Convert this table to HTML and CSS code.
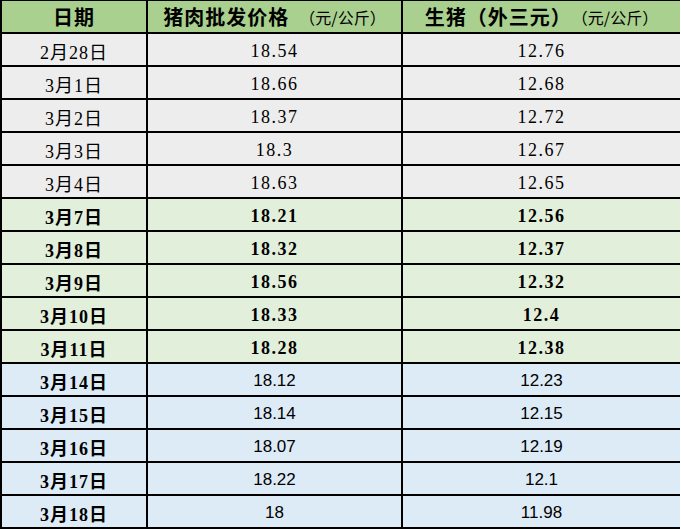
FILE: index.html
```html
<!DOCTYPE html>
<html lang="zh-CN">
<head>
<meta charset="utf-8">
<title>猪肉价格</title>
<link rel="stylesheet" href="styles.css">
</head>
<body>
<div class="sheet">
  <div class="row head">
    <div class="c">日期</div>
    <div class="c">猪肉批发价格<span class="unit gap">（元/公斤）</span></div>
    <div class="c">生猪（外三元）<span class="unit">（元/公斤）</span></div>
  </div>
  <div class="row grey"><div class="c">2月28日</div><div class="c">18.54</div><div class="c">12.76</div></div>
  <div class="row grey"><div class="c">3月1日</div><div class="c">18.66</div><div class="c">12.68</div></div>
  <div class="row grey"><div class="c">3月2日</div><div class="c">18.37</div><div class="c">12.72</div></div>
  <div class="row grey"><div class="c">3月3日</div><div class="c">18.3</div><div class="c">12.67</div></div>
  <div class="row grey"><div class="c">3月4日</div><div class="c">18.63</div><div class="c">12.65</div></div>
  <div class="row green"><div class="c">3月7日</div><div class="c">18.21</div><div class="c">12.56</div></div>
  <div class="row green"><div class="c">3月8日</div><div class="c">18.32</div><div class="c">12.37</div></div>
  <div class="row green"><div class="c">3月9日</div><div class="c">18.56</div><div class="c">12.32</div></div>
  <div class="row green"><div class="c">3月10日</div><div class="c">18.33</div><div class="c">12.4</div></div>
  <div class="row green"><div class="c">3月11日</div><div class="c">18.28</div><div class="c">12.38</div></div>
  <div class="row blue"><div class="c">3月14日</div><div class="c">18.12</div><div class="c">12.23</div></div>
  <div class="row blue"><div class="c">3月15日</div><div class="c">18.14</div><div class="c">12.15</div></div>
  <div class="row blue"><div class="c">3月16日</div><div class="c">18.07</div><div class="c">12.19</div></div>
  <div class="row blue"><div class="c">3月17日</div><div class="c">18.22</div><div class="c">12.1</div></div>
  <div class="row blue"><div class="c">3月18日</div><div class="c">18</div><div class="c">11.98</div></div>
</div>
</body>
</html>
```

FILE: styles.css
```css
html, body {
  margin: 0;
  padding: 0;
  background: #ffffff;
}

.sheet {
  display: grid;
  grid-template-columns: 144px 253px 277px;
  grid-auto-rows: 31px;
  gap: 2px;
  width: 678px;
  padding: 1px 0 2px 2px;
  background: #000000;
  font-family: "Liberation Serif", "Noto Sans CJK SC", serif;
  color: #000000;
}

.row {
  display: contents;
}

.c {
  display: flex;
  align-items: center;
  justify-content: center;
  font-size: 18px;
  letter-spacing: 1.5px;
  padding-top: 3px;
  box-sizing: border-box;
  white-space: nowrap;
}

.row .c:first-child {
  letter-spacing: 1px;
}

.head .c {
  background: #a9d08e;
  font-family: "Noto Sans CJK SC", sans-serif;
  font-weight: 700;
  font-size: 20px;
  letter-spacing: 1px;
  padding-top: 0;
}

.head .c:first-child {
  letter-spacing: 1px;
}

.head .unit {
  font-weight: 400;
  font-size: 16px;
  letter-spacing: 0;
}

.head .gap {
  margin-left: 10px;
}

.grey .c {
  background: #ededed;
}

.green .c {
  background: #e2efda;
  font-weight: 700;
}

.blue .c {
  background: #ddebf7;
  font-family: "Liberation Sans", "Noto Sans CJK SC", sans-serif;
  font-size: 17px;
  letter-spacing: 0;
}

.blue .c:first-child {
  font-family: "Liberation Serif", "Noto Sans CJK SC", serif;
  font-weight: 700;
  font-size: 18px;
  letter-spacing: 1px;
}
```
